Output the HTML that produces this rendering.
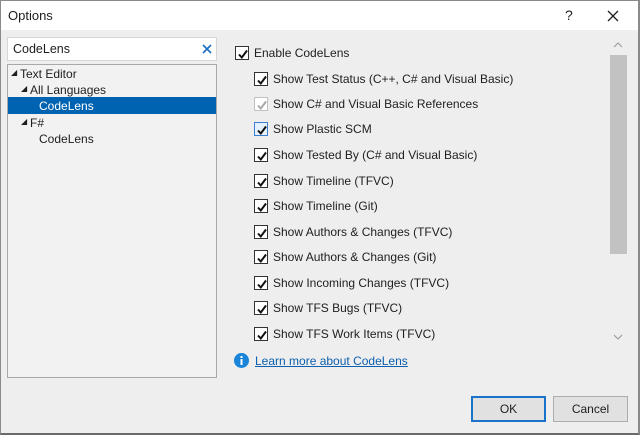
<!DOCTYPE html>
<html><head><meta charset="utf-8"><style>
*{margin:0;padding:0;box-sizing:border-box}
body{width:640px;height:435px;overflow:hidden;background:#eeeeee;font-family:"Liberation Sans",sans-serif;font-size:12px;color:#1e1e1e;position:relative}
.frame{position:absolute;left:0;top:0;width:640px;height:435px;border:1px solid #8a8a8a;border-bottom:2px solid #6a6a6a;border-right:2px solid #8a8a8a}
.title{position:absolute;left:1px;top:1px;width:637px;height:29px;background:#fff}
.a{position:absolute;white-space:nowrap}
.cb{position:absolute;width:14px;height:14px;border:1px solid #333;background:#fff}
.cb svg{position:absolute;left:1px;top:1px}
.lbl{position:absolute;white-space:nowrap;font-size:12px}
.btn{position:absolute;top:396px;width:75px;height:26px;background:#e1e1e1;border:1px solid #adadad;text-align:center;line-height:24px}
</style></head><body>
<div class="title"></div>
<div class="a" style="left:8px;top:8px;font-size:13px">Options</div>
<div class="a" style="left:565px;top:7px;font-size:14px">?</div>
<svg class="a" style="left:607px;top:10px" width="12" height="12"><path d="M1 1L11 11M11 1L1 11" stroke="#222" stroke-width="1.3"/></svg>

<div class="a" style="left:7px;top:37px;width:210px;height:24px;background:#fff;border:1px solid #d6d6d6"></div>
<div class="a" style="left:13px;top:42px;font-size:12.5px">CodeLens</div>
<svg class="a" style="left:202px;top:44px" width="10" height="10"><path d="M1 1L9 9M9 1L1 9" stroke="#1a6fc4" stroke-width="1.6"/></svg>

<div class="a" style="left:7px;top:64px;width:210px;height:314px;background:#f2f2f2;border:1px solid #a8a8a8"></div>
<div class="a" style="left:8px;top:97px;width:208px;height:17px;background:#0063b1"></div>
<div class="a" style="left:11px;top:68px;font-size:8px">◢</div><div class="a" style="left:20px;top:67px">Text Editor</div>
<div class="a" style="left:21px;top:84px;font-size:8px">◢</div><div class="a" style="left:30px;top:83px">All Languages</div>
<div class="a" style="left:39px;top:99px;color:#fff">CodeLens</div>
<div class="a" style="left:21px;top:117px;font-size:8px">◢</div><div class="a" style="left:30px;top:116px">F#</div>
<div class="a" style="left:39px;top:132px">CodeLens</div>

<div id="cbs"></div>
<script>
var items=[["Enable CodeLens",235,46],["Show Test Status (C++, C# and Visual Basic)",254,72],["Show C# and Visual Basic References",254,97,"g"],["Show Plastic SCM",254,122,"b"],["Show Tested By (C# and Visual Basic)",254,148],["Show Timeline (TFVC)",254,174],["Show Timeline (Git)",254,199],["Show Authors & Changes (TFVC)",254,225],["Show Authors & Changes (Git)",254,250],["Show Incoming Changes (TFVC)",254,276],["Show TFS Bugs (TFVC)",254,301],["Show TFS Work Items (TFVC)",254,327]];
var h="";items.forEach(function(i){var bc=i[3]=="g"?"#c2c2c2":(i[3]=="b"?"#3c7fd1":"#333");var sc=i[3]=="g"?"#a8a8a8":"#111";var bg=i[3]=="b"?"#e5f1fb":"#fff";
h+='<div class="cb" style="left:'+i[1]+'px;top:'+i[2]+'px;border-color:'+bc+';background:'+bg+'"><svg width="12" height="12"><path d="M2 6.5L4.8 9.5L10 2.5" fill="none" stroke="'+sc+'" stroke-width="2"/></svg></div>';
h+='<div class="lbl" style="left:'+(i[1]+19)+'px;top:'+(i[2]-0)+'px">'+i[0].replace(/&/g,"&amp;")+'</div>';});
document.getElementById("cbs").innerHTML=h;
</script>

<svg class="a" style="left:613px;top:42px" width="10" height="6"><path d="M1 5L5 1L9 5" fill="none" stroke="#999" stroke-width="1"/></svg>
<div class="a" style="left:610px;top:55px;width:17px;height:199px;background:#c2c2c2"></div>
<svg class="a" style="left:613px;top:334px" width="10" height="6"><path d="M1 1L5 5L9 1" fill="none" stroke="#999" stroke-width="1"/></svg>

<svg class="a" style="left:234px;top:353px" width="15" height="15"><circle cx="7.5" cy="7.5" r="7.5" fill="#1a84d8"/><rect x="6.5" y="6" width="2" height="6" fill="#fff"/><rect x="6.5" y="3" width="2" height="2" fill="#fff"/></svg>
<div class="a" style="left:255px;top:354px;color:#0b5fae;text-decoration:underline">Learn more about CodeLens</div>

<div class="btn" style="left:471px;border-color:#1a73c9;border-width:2px;line-height:22px">OK</div>
<div class="btn" style="left:553px">Cancel</div>
<div class="frame"></div>
</body></html>
